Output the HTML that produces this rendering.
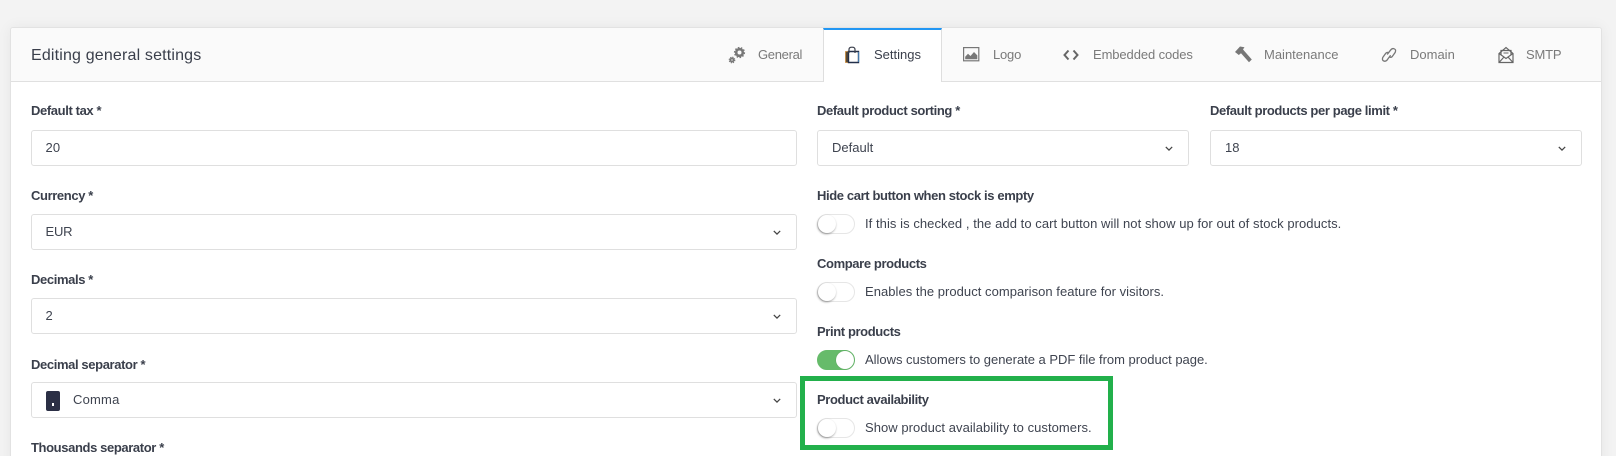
<!DOCTYPE html>
<html><head><meta charset="utf-8">
<style>
html,body{margin:0;padding:0;width:1616px;height:456px;overflow:hidden}
#p{position:absolute;left:0;top:0;width:1616px;height:456px;overflow:hidden;background:#f3f3f3;font-family:"Liberation Sans",sans-serif;color:#3a3f4b}
#card{position:absolute;left:10px;top:27px;width:1592px;height:440px;background:#fff;border:1px solid #e2e2e2;border-radius:3px;box-sizing:border-box;box-shadow:0 0 14px rgba(0,0,0,.06)}
#head{position:absolute;left:11px;top:28px;width:1590px;height:53px;background:#fafafa;border-bottom:1px solid #e0e0e0;border-radius:3px 3px 0 0}
#tab{position:absolute;left:823px;top:28px;width:119px;height:54px;background:#fff;border-top:2px solid #2196f3;border-left:1px solid #dedede;border-right:1px solid #dedede;box-sizing:border-box}
.t{position:absolute;white-space:nowrap;line-height:18px;height:18px}
.l{font-size:13px;font-weight:bold;color:#3a3f4b;letter-spacing:-.38px}
.v{font-size:13px;color:#3f4450}
.n{font-size:13px;color:#7a7a7a}
.b{position:absolute;background:#fff;border:1px solid #dfdfdf;border-radius:3px;box-sizing:border-box;height:36px}
.c{position:absolute;width:8px;height:5px}
.g{position:absolute;width:38px;height:20px;border:1px solid #e6e6e6;border-radius:10px;box-sizing:border-box;background:#fff}
.g i{position:absolute;left:0;top:0;width:18px;height:18px;border-radius:50%;background:#fff;box-shadow:-.5px 1px 2px rgba(0,0,0,.4)}
.g.on{background:#66bb6a;border-color:#66bb6a}
.g.on i{left:18px;box-shadow:0 0 1px rgba(0,0,0,.3)}
svg.i{position:absolute;overflow:visible}
</style></head><body><div id="p">
<div id="card"></div><div id="head"></div><div id="tab"></div>

<div class="t" style="left:31px;top:47px;font-size:16px;color:#3a3f4b;letter-spacing:.17px">Editing general settings</div>

<svg class="i" style="left:729px;top:46px" width="17" height="18" viewBox="0 0 17 18" fill="none" stroke="#777">
<circle cx="10.5" cy="6.5" r="3.3" stroke-width="2.6"/><circle cx="10.5" cy="6.5" r="5" stroke-width="1.2" stroke-dasharray="1.6 1.5"/>
<circle cx="3" cy="14" r="1.6" stroke-width="1.8"/><circle cx="3" cy="14" r="2.8" stroke-width="1.1" stroke-dasharray="1.2 1"/></svg>
<div class="t n" style="left:758px;top:46px;letter-spacing:-.3px">General</div>

<svg class="i" style="left:844px;top:46px" width="16" height="18" viewBox="0 0 16 18" fill="none">
<path d="M1.5 5.5H4.5V16.5H1.5Z" fill="#5a4a36" stroke="#c98a3a" stroke-width=".8"/>
<path d="M4.5 5.5H14.5V16.5H4.5Z" fill="#fff" stroke="#23304a" stroke-width="1.4"/>
<path d="M5 7V3.5Q5 1.2 8 1.2T11 3.5V7" stroke="#3a3f4b" stroke-width="1.2"/>
<path d="M14.8 6V16" stroke="#5aa5e8" stroke-width=".8"/></svg>
<div class="t" style="left:874px;top:46px;font-size:13px;color:#3a3f4b">Settings</div>

<svg class="i" style="left:963px;top:47px" width="17" height="15" viewBox="0 0 17 15" fill="none">
<rect x=".6" y=".6" width="15.2" height="13.2" stroke="#777" stroke-width="1.2"/>
<path d="M2.2 12.2V9.8L5 6.8 7.5 9 11 5 14.3 8.4V12.2Z" fill="#777"/></svg>
<div class="t n" style="left:993px;top:46px;letter-spacing:-.2px">Logo</div>

<svg class="i" style="left:1063px;top:49px" width="16" height="12" viewBox="0 0 16 12" fill="none" stroke="#666" stroke-width="2">
<path d="M5.5 1.5L1.5 6 5.5 10.5M10.5 1.5L14.5 6 10.5 10.5"/></svg>
<div class="t n" style="left:1093px;top:46px;letter-spacing:-.1px">Embedded codes</div>

<svg class="i" style="left:1235px;top:46px" width="17" height="17" viewBox="0 0 17 17">
<path d="M0 6L5 .5 9.5 1.2 8 3.4 9 4.6 16.8 13.5 14 16.2 6 7.2 3.8 9Z" fill="#777"/></svg>
<div class="t n" style="left:1264px;top:46px">Maintenance</div>

<svg class="i" style="left:1381px;top:47px" width="16" height="16" viewBox="0 0 16 16" fill="none" stroke="#777" stroke-width="1.3">
<path d="M6.2 7.5L9.5 3.2Q11 1 13.2 1.8T14.2 5.4L11.2 9.6Q9.6 11 8.2 9.8"/>
<path d="M9.6 8.2L6.4 12.6Q4.9 14.8 2.8 14T1.8 10.4L4.8 6.2Q6.4 4.8 7.8 6"/></svg>
<div class="t n" style="left:1410px;top:46px">Domain</div>

<svg class="i" style="left:1498px;top:46px" width="16" height="18" viewBox="0 0 16 18" fill="none" stroke="#666" stroke-width="1.2">
<path d="M1 7.5V16.5H15V7.5L8 1.5Z"/><path d="M3 9V4.5H13V9"/><path d="M1 16.5L6 11 8 12.5 10 11 15 16.5M1 7.5L6 11M15 7.5L10 11"/><path d="M5.5 7H10.5" stroke-width="1"/></svg>
<div class="t n" style="left:1526px;top:46px;letter-spacing:-.2px">SMTP</div>

<!-- left column -->
<div class="t l" style="left:31px;top:102px">Default tax *</div>
<div class="b" style="left:31px;top:130px;width:766px"></div>
<div class="t v" style="left:45.5px;top:139px;letter-spacing:.2px">20</div>

<div class="t l" style="left:31px;top:187px">Currency *</div>
<div class="b" style="left:31px;top:214px;width:766px"></div>
<div class="t v" style="left:45.5px;top:223px;letter-spacing:-.2px">EUR</div>
<svg class="c" style="left:773px;top:230px" viewBox="0 0 10 6" fill="none" stroke="#444" stroke-width="1.5"><path d="M1 1L5 5 9 1"/></svg>

<div class="t l" style="left:31px;top:271px">Decimals *</div>
<div class="b" style="left:31px;top:298px;width:766px"></div>
<div class="t v" style="left:45.5px;top:307px">2</div>
<svg class="c" style="left:773px;top:314px" viewBox="0 0 10 6" fill="none" stroke="#444" stroke-width="1.5"><path d="M1 1L5 5 9 1"/></svg>

<div class="t l" style="left:31px;top:356px">Decimal separator *</div>
<div class="b" style="left:31px;top:382px;width:766px"></div>
<div style="position:absolute;left:46px;top:391px;width:14px;height:20px;background:#2b2f45;border-radius:2px"></div>
<div style="position:absolute;left:52px;top:403px;width:2px;height:3px;background:#fff"></div>
<div class="t v" style="left:73px;top:391px;letter-spacing:.2px">Comma</div>
<svg class="c" style="left:773px;top:398px" viewBox="0 0 10 6" fill="none" stroke="#444" stroke-width="1.5"><path d="M1 1L5 5 9 1"/></svg>

<div class="t l" style="left:31px;top:439px">Thousands separator *</div>

<!-- right column -->
<div class="t l" style="left:817px;top:102px">Default product sorting *</div>
<div class="b" style="left:817px;top:130px;width:372px"></div>
<div class="t v" style="left:832px;top:139px">Default</div>
<svg class="c" style="left:1165px;top:146px" viewBox="0 0 10 6" fill="none" stroke="#444" stroke-width="1.5"><path d="M1 1L5 5 9 1"/></svg>

<div class="t l" style="left:1210px;top:102px">Default products per page limit *</div>
<div class="b" style="left:1209.5px;top:130px;width:372.5px"></div>
<div class="t v" style="left:1225px;top:139px">18</div>
<svg class="c" style="left:1558px;top:146px" viewBox="0 0 10 6" fill="none" stroke="#444" stroke-width="1.5"><path d="M1 1L5 5 9 1"/></svg>

<div class="t l" style="left:817px;top:187px">Hide cart button when stock is empty</div>
<div class="g" style="left:817px;top:214px"><i></i></div>
<div class="t v" style="left:865px;top:215px;letter-spacing:.06px">If this is checked , the add to cart button will not show up for out of stock products.</div>

<div class="t l" style="left:817px;top:255px">Compare products</div>
<div class="g" style="left:817px;top:282px"><i></i></div>
<div class="t v" style="left:865px;top:283px;letter-spacing:.04px">Enables the product comparison feature for visitors.</div>

<div class="t l" style="left:817px;top:323px">Print products</div>
<div class="g on" style="left:817px;top:350px"><i></i></div>
<div class="t v" style="left:865px;top:351px;letter-spacing:-.02px">Allows customers to generate a PDF file from product page.</div>

<div class="t l" style="left:817px;top:391px">Product availability</div>
<div class="g" style="left:817px;top:418px"><i></i></div>
<div class="t v" style="left:865px;top:419px;letter-spacing:.05px">Show product availability to customers.</div>

<div style="position:absolute;left:800px;top:376px;width:313px;height:74px;border:5px solid #22b04b;box-sizing:border-box"></div>
</div></body></html>
